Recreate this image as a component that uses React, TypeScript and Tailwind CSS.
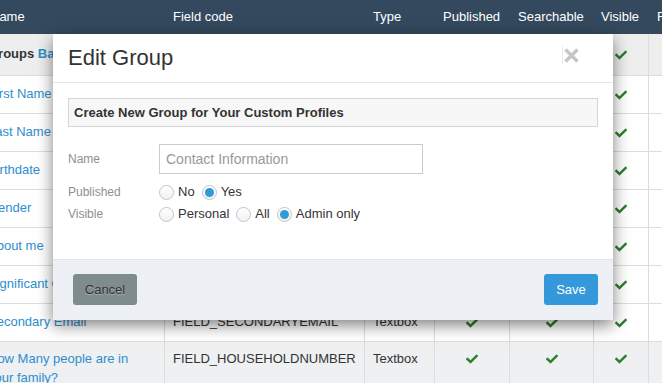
import React from "react";
import { FaCheck } from "react-icons/fa";

const Check = () => <FaCheck className="text-[#2f7d2f]" size={12} />;

type RowT = {
  name: React.ReactNode;
  code: string;
  type: string;
  h: string;
  bg?: string;
  top?: boolean;
  pub?: boolean;
  search?: boolean;
  vis?: boolean;
};

const rows: RowT[] = [
  {
    name: (
      <span className="font-bold text-[#333]">
        Groups <span className="text-[#2e8ece]">Basic Information</span>
      </span>
    ),
    code: "",
    type: "",
    h: "h-[42px]",
    bg: "bg-[#eeeeee]",
    vis: true,
  },
  { name: "First Name", code: "FIELD_FIRSTNAME", type: "Textbox", h: "h-[38px]", pub: true, search: true, vis: true },
  { name: "Last Name", code: "FIELD_LASTNAME", type: "Textbox", h: "h-[38px]", pub: true, search: true, vis: true },
  { name: "Birthdate", code: "FIELD_BIRTHDATE", type: "Date", h: "h-[38px]", pub: true, search: true, vis: true },
  { name: "Gender", code: "FIELD_GENDER", type: "Select", h: "h-[38px]", pub: true, search: true, vis: true },
  { name: "About me", code: "FIELD_ABOUTME", type: "Textarea", h: "h-[38px]", pub: true, search: true, vis: true },
  { name: "Significant Other", code: "FIELD_SIGNIFICANTOTHER", type: "Textbox", h: "h-[38px]", pub: true, search: true, vis: true },
  { name: "Secondary Email", code: "FIELD_SECONDARYEMAIL", type: "Textbox", h: "h-[38px]", pub: true, search: true, vis: true },
  {
    name: "How Many people are in your family?",
    code: "FIELD_HOUSEHOLDNUMBER",
    type: "Textbox",
    h: "h-[60px]",
    bg: "bg-[#eef0f2]",
    top: true,
    pub: true,
    search: true,
    vis: true,
  },
];

function Radio({ checked }: { checked?: boolean }) {
  return (
    <span className="w-[15px] h-[15px] shrink-0 rounded-full border border-[#c4c4c4] bg-[linear-gradient(#ffffff,#f1f1f1)] flex items-center justify-center">
      {checked && <span className="w-[9px] h-[9px] rounded-full bg-[#2e9bd6]" />}
    </span>
  );
}

function Opt({ label, checked }: { label: string; checked?: boolean }) {
  return (
    <span className="flex items-center mr-[7px]">
      <Radio checked={checked} />
      <span className="ml-[4px] text-[13px] text-[#333]">{label}</span>
    </span>
  );
}

export default function App() {
  return (
    <div className="relative w-[662px] h-[383px] overflow-hidden bg-white font-['Liberation_Sans',Arial,sans-serif]">
      {/* table */}
      <div className="ml-[-18px] w-[800px]">
        <div className="flex h-[34px] items-center bg-[#34495e] text-[13px] text-white">
          <div className="w-[182px] pl-[8px]">Name</div>
          <div className="w-[200px] pl-[9px]">Field code</div>
          <div className="w-[70px] pl-[9px]">Type</div>
          <div className="w-[75px] pl-[9px]">Published</div>
          <div className="w-[84px] pl-[9px]">Searchable</div>
          <div className="w-[55px] pl-[8px]">Visible</div>
          <div className="w-[134px] pl-[9px]">Filterable</div>
        </div>
        {rows.map((r, i) => (
          <div
            key={i}
            className={`flex ${r.h} ${r.bg ?? "bg-white"} border-b border-[#dddddd] text-[13px] leading-[1.43] ${r.top ? "items-stretch" : ""}`}
          >
            <div className={`w-[182px] pl-[6px] pr-[8px] flex ${r.top ? "items-start pt-[8px]" : "items-center"} text-[#2e8ece]`}>
              <span>{r.name}</span>
            </div>
            <div className={`w-[200px] border-l border-[#dddddd] pl-[8px] flex ${r.top ? "items-start pt-[8px]" : "items-center"} text-[#333]`}>
              {r.code}
            </div>
            <div className={`w-[70px] border-l border-[#dddddd] pl-[8px] flex ${r.top ? "items-start pt-[8px]" : "items-center"} text-[#333]`}>
              {r.type}
            </div>
            <div className={`w-[75px] border-l border-[#dddddd] flex justify-center ${r.top ? "items-start pt-[11px]" : "items-center"}`}>
              {r.pub && <Check />}
            </div>
            <div className={`w-[84px] border-l border-[#dddddd] flex justify-center ${r.top ? "items-start pt-[11px]" : "items-center"}`}>
              {r.search && <Check />}
            </div>
            <div className={`w-[55px] border-l border-[#dddddd] flex justify-center ${r.top ? "items-start pt-[11px]" : "items-center"}`}>
              {r.vis && <Check />}
            </div>
            <div className="w-[134px] border-l border-[#dddddd]" />
          </div>
        ))}
      </div>

      {/* modal */}
      <div className="absolute left-[53px] top-[34px] w-[560px] bg-white shadow-[0_5px_15px_rgba(0,0,0,0.5)]">
        <div className="h-[49px] border-b border-[#e5e5e5] flex items-center justify-between pl-[15px] pr-[34px]">
          <div className="text-[22px] text-[#333] leading-none">Edit Group</div>
          <div className="flex items-center mb-[6px]">
            <span className="w-px h-[18px] bg-[#ececec] mr-[1px]" />
            <svg width="15" height="15" viewBox="0 0 15 15">
              <path d="M1.5 1.5 L13.5 13.5 M13.5 1.5 L1.5 13.5" stroke="#c6c6c6" strokeWidth="3.4" />
            </svg>
          </div>
        </div>
        <div className="px-[15px] pt-[15px] pb-[35px]">
          <div className="h-[29px] border border-[#d5d5d5] bg-[#f7f7f7] flex items-center pl-[5px] text-[13px] font-bold text-[#333]">
            Create New Group for Your Custom Profiles
          </div>
          <div className="mt-[17px] flex items-center h-[30px]">
            <div className="w-[91px] text-[12px] text-[#8f8f8f]">Name</div>
            <input
              className="w-[264px] h-[30px] border border-[#cccccc] pl-[6px] text-[14px] text-[#333] placeholder:text-[#999] outline-none"
              placeholder="Contact Information"
            />
          </div>
          <div className="mt-[8px] flex items-center h-[20px]">
            <div className="w-[91px] text-[12px] text-[#8f8f8f]">Published</div>
            <Opt label="No" />
            <Opt label="Yes" checked />
          </div>
          <div className="mt-[2px] flex items-center h-[20px]">
            <div className="w-[91px] text-[12px] text-[#8f8f8f]">Visible</div>
            <Opt label="Personal" />
            <Opt label="All" />
            <Opt label="Admin only" checked />
          </div>
        </div>
        <div className="border-t border-[#e2e5ea] bg-[#edf0f4] pt-[14px] pb-[15px] pl-[20px] pr-[15px] flex justify-between">
          <button className="w-[64px] h-[31px] rounded-[3px] bg-[#7f8c8d] text-[13px] text-[#333] [text-shadow:0_1px_1px_rgba(255,255,255,0.35)]">
            Cancel
          </button>
          <button className="w-[54px] h-[31px] rounded-[3px] bg-[#3498db] text-[13px] text-white">Save</button>
        </div>
      </div>
    </div>
  );
}
